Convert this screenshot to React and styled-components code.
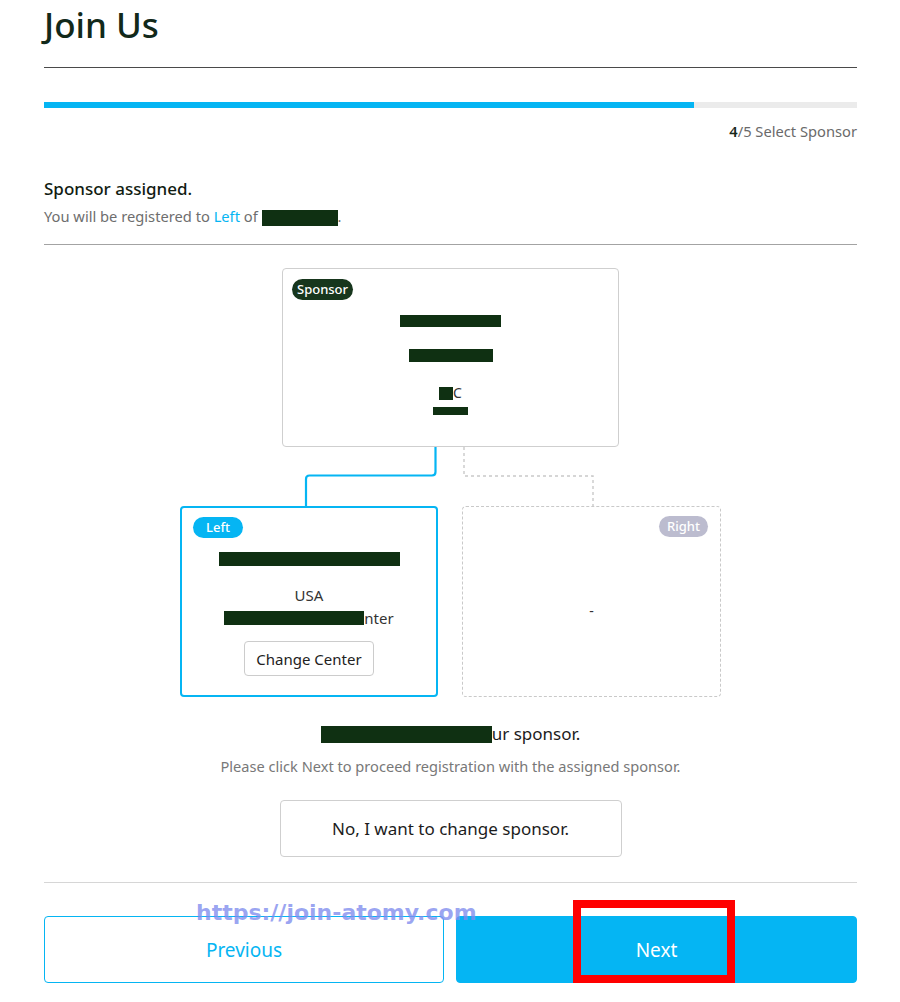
import React from 'react';
import styled, { createGlobalStyle } from 'styled-components';

const blue = '#05b5f3';
const ink = '#16281a';
const hidden = '#0f3012';

const GlobalStyle = createGlobalStyle`
    * { box-sizing: border-box; }
    body { margin: 0; background: #fff; font-family: "Noto Sans", "Open Sans", sans-serif; color: ${ink}; }
`;

const PageBlock = styled.div`
    position: relative;
    width: 900px;
    padding: 0 43px 18px 44px;
`;

const Title = styled.h1`
    margin: 0;
    font-size: 35px; font-weight: 500; line-height: 49px;
    color: #12291a;
    padding-bottom: 18px;
    border-bottom: 1px solid #4a4a4a;
`;

const Progress = styled.div`
    margin-top: 34px; height: 6px;
    background: #ebebeb;
    div { height: 100%; background: ${blue}; }
`;

const Step = styled.p`
    margin: 13px 0 0; text-align: right;
    font-size: 14.7px; line-height: 20px; color: #6a6a6a;
    b { color: ${ink}; font-weight: 600; }
`;

const Notice = styled.div`
    margin-top: 36px; padding-bottom: 18px;
    border-bottom: 1px solid #a3a3a3;
    h2 { margin: 0; font-size: 17px; font-weight: 500; line-height: 24px; color: #111c12; }
    p { margin: 5px 0 0; font-size: 14.7px; line-height: 20px; color: #6e6e6e;
        em { font-style: normal; color: ${blue}; }
    }
`;

const Redact = styled.span`
    display: inline-block; vertical-align: middle;
    width: ${p => p.$w}px; height: ${p => p.$h}px;
    background: ${hidden};
`;

const Tree = styled.div`
    margin-top: 23px;
    display: flex; flex-direction: column; align-items: center;
    svg { display: block; }
`;

const SponsorCard = styled.div`
    width: 337px; height: 179px;
    border: 1px solid #cfcfcf; border-radius: 4px;
    padding: 10px 9px;
    display: flex; flex-direction: column; align-items: center;
`;

const badgePad = { left: 13, right: 8 };

const Badge = styled.span`
    align-self: ${p => p.$side === 'right' ? 'flex-end' : 'flex-start'};
    height: 21px; padding: 0 ${p => badgePad[p.$side] || 5}px;
    border-radius: 11px;
    background: ${p => p.$bg};
    color: #fff; font-size: 13px; line-height: 21px; font-weight: 500;
`;

const Line = styled.div`
    margin-top: ${p => p.$mt || 0}px;
    font-size: ${p => p.$size || 14}px; line-height: 20px; color: #333;
    display: flex; align-items: center; justify-content: center;
`;

const Branches = styled.div`
    display: grid; grid-template-columns: 258px 259px; gap: 24px;
`;

const Leg = styled.div`
    height: 191px; border-radius: 4px;
    border: ${p => p.$active ? `2px solid ${blue}` : '1px dashed #c9c9c9'};
    padding: 9px ${p => p.$active ? 11 : 12}px;
    display: flex; flex-direction: column; align-items: center;
`;

const SmallButton = styled.button`
    margin-top: 13px; width: 130px; height: 35px;
    background: #fff; border: 1px solid #cccccc; border-radius: 4px;
    font-family: inherit; font-size: 15px; color: #222;
`;

const Message = styled.div`
    margin-top: 25px; text-align: center;
    h3 { margin: 0; font-size: 17px; font-weight: 400; line-height: 24px; color: #1c1c1c;
        display: flex; justify-content: center; align-items: center; }
    p { margin: 10px 0 0; font-size: 14.6px; line-height: 20px; color: #787878; }
`;

const ChangeButton = styled.button`
    display: block; margin: 24px auto 0;
    width: 342px; height: 57px;
    background: #fff; border: 1px solid #cfcfcf; border-radius: 4px;
    font-family: inherit; font-size: 17px; color: #1c1c1c;
`;

const Footer = styled.div`
    margin-top: 25px; padding-top: 33px;
    border-top: 1px solid #d6d6d6;
    display: grid; grid-template-columns: 400px 401px; gap: 12px;
`;

const NavButton = styled.button`
    height: 67px; border-radius: 4px;
    border: 1px solid ${blue};
    background: ${p => p.$primary ? blue : '#fff'};
    color: ${p => p.$primary ? '#fff' : blue};
    font-family: inherit; font-size: 19px;
`;

const Watermark = styled.span`
    position: absolute; left: 196px; top: 900px;
    font-family: "DejaVu Sans", sans-serif; font-weight: 700; font-size: 22px;
    color: rgba(128, 140, 238, 0.78);
    pointer-events: none;
`;

const Marker = styled.div`
    position: absolute; left: 573px; top: 900px;
    width: 162px; height: 83px;
    border: 8px solid #ff0000;
    pointer-events: none;
`;

const App = () => {
    return (
        <>
            <GlobalStyle />
            <PageBlock>
                <Title>Join Us</Title>
                <Progress><div style={{ width: '80%' }} /></Progress>
                <Step><b>4</b>/5 Select Sponsor</Step>

                <Notice>
                    <h2>Sponsor assigned.</h2>
                    <p>You will be registered to <em>Left</em> of <Redact $w={76} $h={16} />.</p>
                </Notice>

                <Tree>
                    <SponsorCard>
                        <Badge $bg="#17361d">Sponsor</Badge>
                        <Redact $w={101} $h={12} style={{ marginTop: 15 }} />
                        <Redact $w={84} $h={13} style={{ marginTop: 22 }} />
                        <Line $mt={21}><Redact $w={14} $h={13} />C</Line>
                        <Redact $w={35} $h={8} style={{ marginTop: 4 }} />
                    </SponsorCard>

                    <svg width="541" height="59" viewBox="0 0 541 59">
                        <path d="M255.5 0 V25 Q255.5 28.5 252 28.5 H129.5 Q126 28.5 126 32 V59"
                            fill="none" stroke={blue} strokeWidth="2.2" />
                        <path d="M284 0 V29 H413 V59"
                            fill="none" stroke="#c9c9c9" strokeWidth="1.4" strokeDasharray="3 3" />
                    </svg>

                    <Branches>
                        <Leg $active>
                            <Badge $side="left" $bg={blue}>Left</Badge>
                            <Redact $w={181} $h={14} style={{ marginTop: 14 }} />
                            <Line $mt={19} $size={15}>USA</Line>
                            <Line $mt={3} $size={15}><Redact $w={140} $h={14} />nter</Line>
                            <SmallButton>Change Center</SmallButton>
                        </Leg>
                        <Leg>
                            <Badge $side="right" $bg="#bcbccf">Right</Badge>
                            <Line $mt={64}>-</Line>
                        </Leg>
                    </Branches>
                </Tree>

                <Message>
                    <h3><Redact $w={171} $h={17} />ur sponsor.</h3>
                    <p>Please click Next to proceed registration with the assigned sponsor.</p>
                </Message>
                <ChangeButton>No, I want to change sponsor.</ChangeButton>

                <Footer>
                    <NavButton>Previous</NavButton>
                    <NavButton $primary>Next</NavButton>
                </Footer>

                <Watermark>https://join-atomy.com</Watermark>
                <Marker />
            </PageBlock>
        </>
    );
};

export default App;
